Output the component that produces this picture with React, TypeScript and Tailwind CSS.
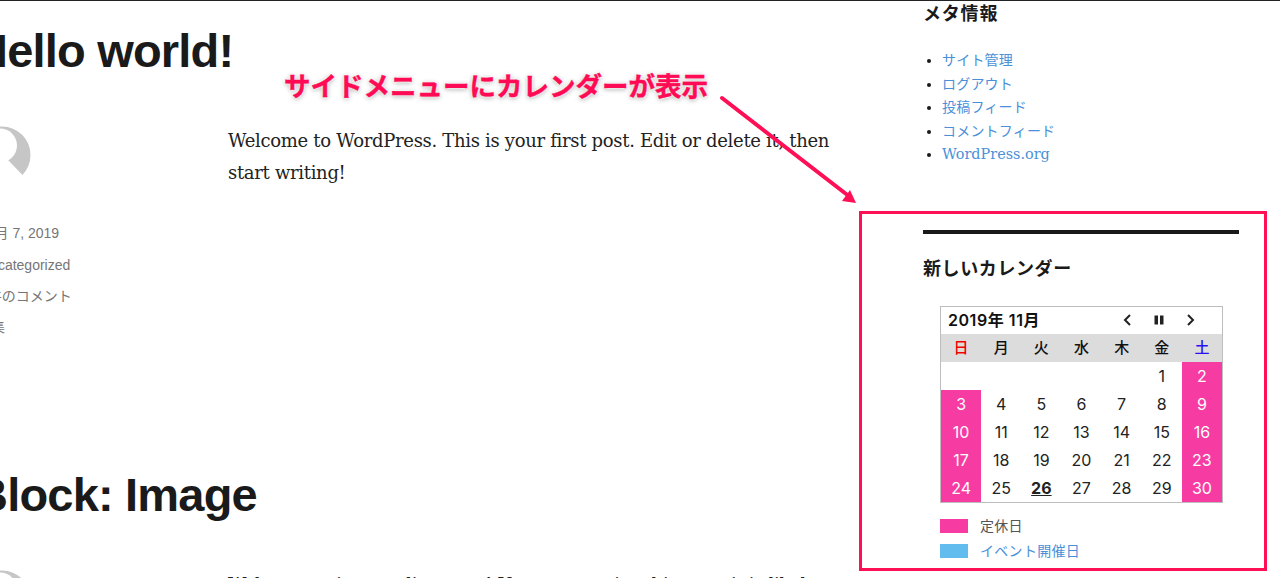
const sans = "font-['Liberation_Sans','Noto_Sans_CJK_JP',sans-serif]";
const cal = "font-['Inter','Noto_Sans_CJK_JP',sans-serif]";

const weekdays = [
  { t: "日", c: "text-[#f00000]" },
  { t: "月", c: "text-[#111111]" },
  { t: "火", c: "text-[#111111]" },
  { t: "水", c: "text-[#111111]" },
  { t: "木", c: "text-[#111111]" },
  { t: "金", c: "text-[#111111]" },
  { t: "土", c: "text-[#2a10f5]" },
];

const days: (number | null)[] = [
  null, null, null, null, null, 1, 2,
  3, 4, 5, 6, 7, 8, 9,
  10, 11, 12, 13, 14, 15, 16,
  17, 18, 19, 20, 21, 22, 23,
  24, 25, 26, 27, 28, 29, 30,
];

function Avatar() {
  return (
    <svg width="60" height="60" viewBox="0 0 60 60" className="block">
      <circle cx="29" cy="29" r="28.5" fill="#c6c6c6" />
      <circle cx="27" cy="19.5" r="17" fill="#ffffff" />
      <path d="M35 34 L49 48.5 L53 60 L0 60 L0 34 Z" fill="#ffffff" />
    </svg>
  );
}

function Calendar() {
  return (
    <div className={`ml-[17px] mt-[25px] w-[283px] border border-[#bdbdbd] ${cal}`}>
      <div className="flex h-[27px] items-center bg-white pl-[7px] text-[16px] leading-[27px] font-semibold text-[#111111]">
        <span className="w-[175px] tracking-[0.55px] whitespace-nowrap">2019年 11月</span>
        <svg width="10" height="14" viewBox="0 0 10 14" className="ml-[-1px]">
          <path d="M8 2 L3 7 L8 12" fill="none" stroke="#222" strokeWidth="2" />
        </svg>
        <svg width="12" height="10" viewBox="0 0 12 10" className="ml-[21px]">
          <rect x="1.5" y="0.5" width="3.5" height="9" fill="#222" />
          <rect x="7" y="0.5" width="3.5" height="9" fill="#222" />
        </svg>
        <svg width="10" height="14" viewBox="0 0 10 14" className="ml-[21px]">
          <path d="M2 2 L7 7 L2 12" fill="none" stroke="#222" strokeWidth="2" />
        </svg>
      </div>
      <div className="grid h-[28px] grid-cols-7 bg-[#dcdcdc]">
        {weekdays.map((w) => (
          <div key={w.t} className={`flex items-center justify-center text-[15px] leading-[28px] font-medium ${w.c}`}>
            {w.t}
          </div>
        ))}
      </div>
      <div className="grid grid-cols-7 bg-white">
        {days.map((d, i) => {
          const closed = d !== null && (i % 7 === 0 || i % 7 === 6);
          return (
            <div
              key={i}
              className={`flex h-[28px] items-center justify-center text-[16px] leading-[28px] ${
                closed ? "bg-[#f63ca3] text-white" : "text-[#222222]"
              } ${d === 26 ? "font-bold underline" : ""}`}
            >
              {d}
            </div>
          );
        })}
      </div>
    </div>
  );
}

function Sidebar() {
  return (
    <aside className="w-[316px] shrink-0">
      <h2 className={`mt-[1px] text-[18px] leading-[24px] font-bold tracking-[0.8px] text-[#1a1a1a] ${sans}`}>メタ情報</h2>
      <ul className="mt-[23px] list-disc pl-[19px] font-['Liberation_Serif','Noto_Sans_CJK_JP',serif] text-[14px] leading-[23.5px] text-[#1a1a1a]">
        {["サイト管理", "ログアウト", "投稿フィード", "コメントフィード"].map((t) => (
          <li key={t} className="h-[23.5px]">
            <a className="tracking-[0.2px] text-[#4a90d9]">{t}</a>
          </li>
        ))}
        <li className="h-[23.5px]">
          <a className="font-['DejaVu_Serif',serif] text-[14.4px] text-[#4a90d9]">WordPress.org</a>
        </li>
      </ul>
      <div className="mt-[63px] h-[4px] w-[316px] bg-[#1a1a1a]" />
      <h2 className={`mt-[23px] text-[18px] leading-[24px] font-bold tracking-[0.6px] text-[#1a1a1a] ${sans}`}>
        新しいカレンダー
      </h2>
      <Calendar />
      <div className={`ml-[17px] mt-[16px] flex items-center text-[14px] leading-[14px] tracking-[0.3px] text-[#555555] ${sans}`}>
        <span className="mr-[12px] h-[14px] w-[28px] bg-[#f63ca3]" />
        定休日
      </div>
      <div className={`ml-[17px] mt-[11px] flex items-center text-[14px] leading-[14px] tracking-[0.3px] text-[#4a90d9] ${sans}`}>
        <span className="mr-[12px] h-[14px] w-[28px] bg-[#62bced]" />
        イベント開催日
      </div>
    </aside>
  );
}

function Article({ title, lines }: { title: string; lines: string[] }) {
  return (
    <article>
      <h1 className={`ml-[6px] text-[47px] leading-[56px] font-bold tracking-[-0.8px] text-[#1a1a1a] ${sans}`}>{title}</h1>
      <div className="mt-[49px] flex">
        <div className={`w-[260px] shrink-0 text-[14px] leading-[31.3px] text-[#767676] ${sans}`}>
          <div className="ml-[5px] mt-[-2px]">
            <Avatar />
          </div>
          <div className="ml-[12px] mt-[32px] whitespace-nowrap">11月 7, 2019</div>
          <div className="ml-[12px] mt-[1px]">Uncategorized</div>
          <div className="ml-[12px] mt-[-1px]">1件のコメント</div>
          <div className="ml-[9px]">編集</div>
        </div>
        <div className="mt-[-3px] font-['DejaVu_Serif',serif] text-[18px] leading-[32px] tracking-[-0.31px] text-[#222222]">
          {lines.map((l) => (
            <p key={l} className="whitespace-nowrap">{l}</p>
          ))}
        </div>
      </div>
    </article>
  );
}

export default function App() {
  return (
    <div className="relative h-[578px] w-[1280px] overflow-hidden border-t border-[#222222] bg-white">
      <div className="flex">
        <main className="ml-[-32px] w-[955px] shrink-0 pt-[22px]">
          <Article
            title="Hello world!"
            lines={["Welcome to WordPress. This is your first post. Edit or delete it, then", "start writing!"]}
          />
          <div className="mt-[124px]">
            <Article
              title="Block: Image"
              lines={["Welcome to image alignment! If you recognize this post, it is likely"]}
            />
          </div>
        </main>
        <Sidebar />
      </div>

      {/* annotation overlays */}
      <div className="absolute left-[859px] top-[210px] h-[360px] w-[408px] border-[3px] border-[#ff0f55]" />
      <div
        className={`absolute left-[284px] top-[68px] whitespace-nowrap text-[26.5px] leading-[36px] font-bold text-[#ff0a54] [-webkit-text-stroke:0.4px_#ff0a54] [text-shadow:0_0_3px_#fff,0_0_3px_#fff,0_1px_5px_rgba(0,0,0,0.45)] ${sans}`}
      >
        サイドメニューにカレンダーが表示
      </div>
      <svg className="absolute left-[715px] top-[90px]" width="150" height="120" viewBox="0 0 150 120">
        <path d="M7 7 L135 106" stroke="#ff0f55" strokeWidth="4" strokeLinecap="round" />
        <path d="M141 112 L127 110 L135 99 Z" fill="#ff0f55" />
      </svg>
    </div>
  );
}
